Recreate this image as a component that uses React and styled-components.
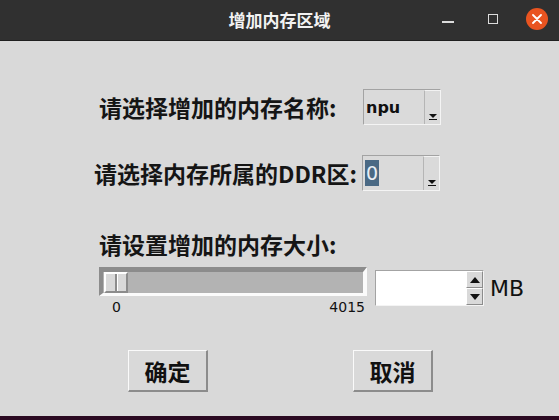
import React from "react";
import styled, { createGlobalStyle } from "styled-components";

const GlobalStyle = createGlobalStyle`
  html, body {
    margin: 0;
    padding: 0;
    background: #d9d9d9;
  }
  body {
    font-family: "Noto Sans CJK SC", "Noto Sans", sans-serif;
  }
`;

const Window = styled.div`
  width: 559px;
  height: 420px;
  display: flex;
  flex-direction: column;
  background: #d9d9d9;
  overflow: hidden;
`;

const TitleBar = styled.div`
  height: 40px;
  flex: none;
  background: #303030;
  border-bottom: 1px solid #1f1f1f;
  display: flex;
  align-items: center;
  justify-content: center;
  position: relative;
`;

const Title = styled.div`
  color: #f2f2f2;
  font-size: 17px;
  font-weight: 700;
  margin-top: -2px;
`;

const Controls = styled.div`
  position: absolute;
  right: 11px;
  top: 0;
  height: 37px;
  display: flex;
  align-items: center;
`;

const MinBtn = styled.div`
  width: 12px;
  height: 2px;
  background: #dcdcdc;
  margin-top: 7px;
  margin-right: 34px;
`;

const MaxBtn = styled.div`
  width: 8px;
  height: 8px;
  border: 1.5px solid #dcdcdc;
  margin-right: 28px;
`;

const CloseBtn = styled.div`
  width: 22px;
  height: 22px;
  border-radius: 50%;
  background: #e95420;
  display: flex;
  align-items: center;
  justify-content: center;
`;

const Body = styled.div`
  flex: 1;
  display: flex;
  flex-direction: column;
  padding: 48px 0 0 0;
`;

const FormGrid = styled.div`
  display: grid;
  grid-template-columns: 268px 78px;
  row-gap: 30px;
  margin-left: 94px;
  align-items: center;
`;

const Label = styled.div`
  font-size: 23px;
  font-weight: 600;
  color: #151515;
  line-height: 36px;
  white-space: pre;
  padding-left: ${(p) => p.$indent || 0}px;
`;

const Combo = styled.div`
  width: 78px;
  height: 36px;
  box-sizing: border-box;
  border-top: 1px solid #a3a3a3;
  border-left: 1px solid #a3a3a3;
  border-bottom: 1px solid #f4f4f4;
  border-right: 1px solid #f4f4f4;
  display: flex;
  background: #dadada;
  margin-left: ${(p) => p.$shift || 0}px;
`;

const ComboField = styled.div`
  flex: 1;
  display: flex;
  align-items: center;
  padding-left: 2px;
  font-family: "DejaVu Sans", sans-serif;
  font-size: 16px;
  font-weight: 600;
  color: #111;
`;

const Selected = styled.span`
  background: #4a6984;
  color: #e8eef4;
  padding: 0 1px;
  line-height: 26px;
  font-size: 19px;
  font-weight: 400;
`;

const ComboArrow = styled.div`
  width: 16px;
  border-left: 1px solid #b5b5b5;
  border-top: 1px solid #f2f2f2;
  display: flex;
  align-items: flex-end;
  justify-content: center;
  padding-bottom: 4px;
  box-sizing: border-box;
`;

const SizeSection = styled.div`
  margin-top: 35px;
  margin-left: 99px;
  display: flex;
  flex-direction: column;
`;

const SizeRow = styled.div`
  display: flex;
  align-items: flex-start;
  margin-top: 5px;
`;

const SliderCol = styled.div`
  width: 268px;
  display: flex;
  flex-direction: column;
`;

const SliderFrame = styled.div`
  height: 21px;
  background: #b3b3b3;
  border-top: 5px solid #8c8c8c;
  border-left: 4px solid #8c8c8c;
  border-bottom: 3px solid #fbfbfb;
  border-right: 4px solid #fbfbfb;
  display: flex;
  align-items: stretch;
`;

const Thumb = styled.div`
  width: 24px;
  box-sizing: border-box;
  margin-left: 1px;
  background: #d9d9d9;
  border-top: 2px solid #ffffff;
  border-left: 2px solid #ffffff;
  border-bottom: 2px solid #8c8c8c;
  border-right: 2px solid #8c8c8c;
  display: flex;
  justify-content: center;
`;

const Groove = styled.div`
  width: 2px;
  background: #8c8c8c;
  border-right: 1px solid #fff;
`;

const Ticks = styled.div`
  display: flex;
  justify-content: space-between;
  padding: 0 2px 0 13px;
  font-family: "DejaVu Sans", sans-serif;
  font-size: 14px;
  color: #111;
  line-height: 22px;
`;

const Spin = styled.div`
  margin-left: 8px;
  margin-top: 3px;
  width: 109px;
  height: 36px;
  box-sizing: border-box;
  display: flex;
  border-top: 1px solid #a3a3a3;
  border-left: 1px solid #a3a3a3;
  border-bottom: 1px solid #f4f4f4;
  border-right: 1px solid #f4f4f4;
`;

const SpinField = styled.div`
  flex: 1;
  background: #fff;
`;

const SpinButtons = styled.div`
  width: 17px;
  display: flex;
  flex-direction: column;
`;

const SpinBtn = styled.div`
  flex: 1;
  box-sizing: border-box;
  background: #d9d9d9;
  border-top: 1px solid #fff;
  border-left: 1px solid #fff;
  border-bottom: 1px solid #8c8c8c;
  border-right: 1px solid #8c8c8c;
  display: flex;
  align-items: center;
  justify-content: center;
`;

const Unit = styled.div`
  margin-left: 6px;
  margin-top: 9px;
  font-family: "DejaVu Sans", sans-serif;
  font-size: 22px;
  color: #111;
`;

const ButtonRow = styled.div`
  display: flex;
  margin-top: 32px;
  margin-left: 128px;
  gap: 145px;
`;

const Button = styled.div`
  width: 80px;
  height: 42px;
  box-sizing: border-box;
  background: #d9d9d9;
  border-top: 1px solid #fafafa;
  border-left: 1px solid #fafafa;
  border-bottom: 2px solid #8c8c8c;
  border-right: 2px solid #8c8c8c;
  display: flex;
  align-items: center;
  justify-content: center;
  font-size: 23px;
  font-weight: 600;
  color: #111;
`;

const BottomStrip = styled.div`
  height: 4px;
  flex: none;
  background: #2c0a22;
`;

const DownTri = () => (
  <svg width="8" height="6" viewBox="0 0 8 6">
    <path d="M0 0h8L4 4z" fill="#111" />
    <rect x="0" y="5" width="8" height="1" fill="#111" />
  </svg>
);

const Tri = ({ up }) => (
  <svg width="10" height="6" viewBox="0 0 10 6">
    <path d={up ? "M5 0L10 6H0z" : "M0 0h10L5 6z"} fill="#111" />
  </svg>
);

export default function App() {
  return (
    <Window>
      <GlobalStyle />
      <TitleBar>
        <Title>增加内存区域</Title>
        <Controls>
          <MinBtn />
          <MaxBtn />
          <CloseBtn>
            <svg width="10" height="10" viewBox="0 0 10 10">
              <path d="M1 1L9 9M9 1L1 9" stroke="#fff" strokeWidth="1.8" strokeLinecap="round" />
            </svg>
          </CloseBtn>
        </Controls>
      </TitleBar>
      <Body>
        <FormGrid>
          <Label $indent={5}>请选择增加的内存名称:</Label>
          <Combo $shift={1}>
            <ComboField>npu</ComboField>
            <ComboArrow>
              <DownTri />
            </ComboArrow>
          </Combo>
          <Label>请选择内存所属的DDR区:</Label>
          <Combo>
            <ComboField>
              <Selected>0</Selected>
            </ComboField>
            <ComboArrow>
              <DownTri />
            </ComboArrow>
          </Combo>
        </FormGrid>
        <SizeSection>
          <Label>请设置增加的内存大小:</Label>
          <SizeRow>
            <SliderCol>
              <SliderFrame>
                <Thumb>
                  <Groove />
                </Thumb>
              </SliderFrame>
              <Ticks>
                <span>0</span>
                <span>4015</span>
              </Ticks>
            </SliderCol>
            <Spin>
              <SpinField />
              <SpinButtons>
                <SpinBtn>
                  <Tri up />
                </SpinBtn>
                <SpinBtn>
                  <Tri />
                </SpinBtn>
              </SpinButtons>
            </Spin>
            <Unit>MB</Unit>
          </SizeRow>
        </SizeSection>
        <ButtonRow>
          <Button>确定</Button>
          <Button>取消</Button>
        </ButtonRow>
      </Body>
      <BottomStrip />
    </Window>
  );
}
